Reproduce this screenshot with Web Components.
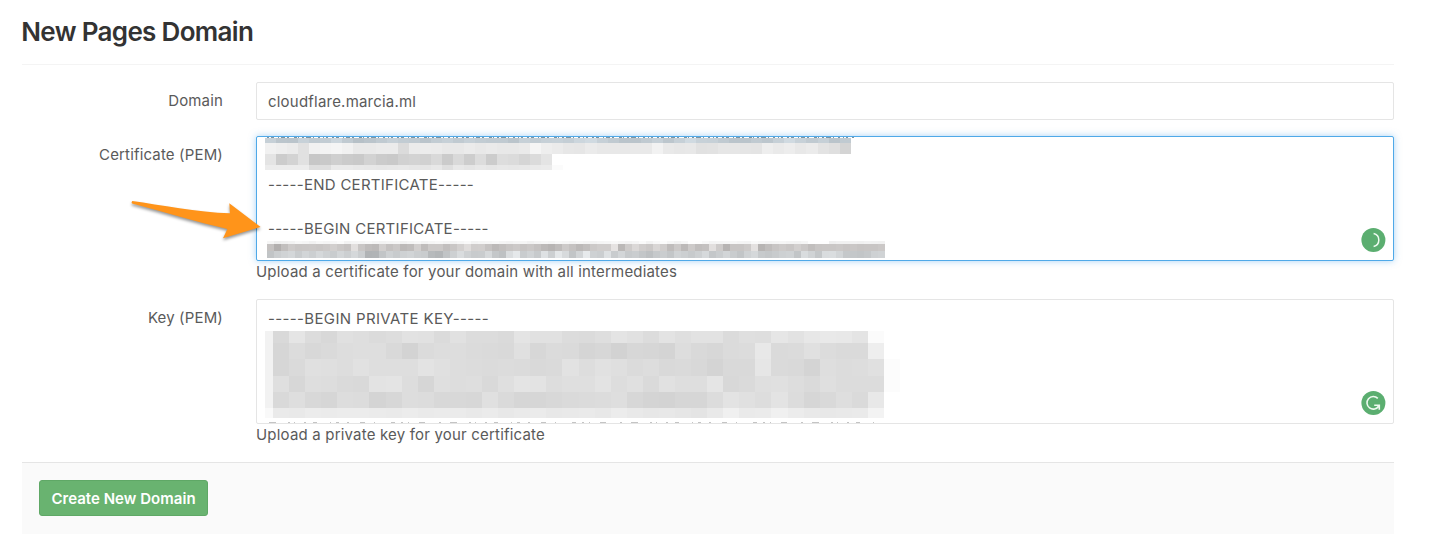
<!DOCTYPE html>
<html lang="en">
<head>
<meta charset="utf-8">
<title>New Pages Domain</title>
<style>
body { margin: 0; background: #fff; font: 15px/22px Inter, "Open Sans", sans-serif; color: #5a5a5a; font-feature-settings: "calt" 0; }
</style>
</head>
<body>
<pages-domain-form></pages-domain-form>
<script>
class BaseElement extends HTMLElement {
  connectedCallback() {
    if (!this.shadowRoot) this.attachShadow({ mode: 'open' }).innerHTML = this.render();
  }
}

/* Title with a hairline below it */
customElements.define('page-title', class extends BaseElement {
  render() {
    return `<style>
      :host { display: block; box-sizing: border-box; height: 65px; padding-top: 16px; border-bottom: 1px solid #f4f4f4; }
      h1 { margin: 0 0 0 -0.7px; font-size: 26px; line-height: 32px; font-weight: 600; letter-spacing: -0.68px; color: #333; white-space: nowrap; }
    </style><h1><slot></slot></h1>`;
  }
});

/* Label on the left, control and hint on the right */
customElements.define('form-row', class extends BaseElement {
  render() {
    return `<style>
      :host { display: grid; grid-template-columns: 201px 1fr; column-gap: 33px; }
      .label { text-align: right; padding-top: 8px; letter-spacing: 0.16px; white-space: nowrap; }
      .hint { display: block; letter-spacing: 0.19px; white-space: nowrap; }
    </style><div class="label">${this.getAttribute('label')}</div>
    <div><slot></slot><span class="hint"><slot name="hint"></slot></span></div>`;
  }
});

customElements.define('text-box', class extends BaseElement {
  render() {
    return `<style>
      :host { display: block; position: relative; box-sizing: border-box; height: 38px; padding: 8px 11px; border: 1px solid #e5e5e5; border-radius: 2px; background: #fff; letter-spacing: var(--value-spacing, 0.21px); }
      :host([multiline]) { height: 125px; }
      :host([focused]) { border-color: #4fa9e8; box-shadow: 0 0 7px rgba(82,168,236,.5); }
      .value { white-space: pre; margin-top: var(--scroll, 0); }
    </style><div class="value"><slot></slot></div><slot name="overlay"></slot>`;
  }
});

/* Redaction mosaic: bands of grey cells */
const bands = {
  certTop: { w: 600, h: 34, rows: [
    { y: 1, h: 5.3, x: 0, p: 11.05, n: 53, tint: 'blue', c: 'c9bebdcac3c5cfc3b9bdc3c9c5c3bdc5c9c3c9c5c3c3bdc9c5c9cac7cfd3c9c3bdbdc3c9bfc9d3cac9c3bdbdc3bfc9d3cac3c9bdc3c9bdbd' },
    { y: 6, h: 11, x: 0, p: 11.05, n: 52, last: 'd4', c: 'f1eeebe1f1f3f5f1e9e9ebebdbebecebe8e8ebe8eae8e8eaf5eeebe7e6ebe8e8e8e9e9f2e9e7e8e1e2e6e6e5e4eeeaede8ebe3dfe9f1e6e5e7e6d4' },
    { y: 17, h: 11, x: 0, p: 11.05, n: 26, c: 'e4ccd3e1c7c9cfcbc9d2cbc9d1d3d1d9cbd9cddcccdad5dbdbe4' },
    { y: 28, h: 5, x: 0, p: 11.05, n: 26, last: 'fb', c: 'ececececdedeeaeae8e7e6e7e8e6e5e8dfe8e5e8e6e8e7e8eaeb' }
  ] },
  certBottom: { w: 618, h: 17, rows: [
    { y: 0, h: 3.4, x: 0, p: 7.02, c: 'f6eff1f3f8f6f2f7f5f7fbf3f5f6f8f5f3f5f6f2f5f7f3f6f8f5f3f6f9f3f5f6f8f5f3f5f6f2f5f7f5f8f6f4f7f5f3f5f6f8f5f3f5faf3f8fcf6f2f6fefdf8f4f5f6f7f5f4f9f6f4f5f6f4f3f6fefefeeff1f1f2f1f3f2f1eff2f3f2f4f1' },
    { y: 3.4, h: 7, x: 0, p: 7.02, tint: 'warm', c: 'c2afbfcbc6c7c8c6c9cfc8c3dfc6bcb9cfc2c8b9bdcfbcc9c9bfc6d0dccdcec3b9bfc5c9c4c8c2b9b4bccac2b9bfc9cdcde3b8cbd8cdc8d6cdbcc9b9cabec1dfcbb4c5c5cae1b4bdc5cac6cfc8bec5c6c6c8c5c7c4c5c5c8c5bdce' },
    { y: 10.4, h: 6.3, x: 0, p: 7.02, tint: 'cool', c: 'c2ccd1d5cad3cdd6cfcad4cdd6ccb1b2c3cfc9cfd2cccab8b4c2cedacfc9cad7c5bfdbe6cad1c8dfcde5d8c3d3e8cfccdfcad4c8cbc4bec7cbc4d1cdc8ced7c5cbd3cac3d0d6c8c5c9ced0c3dad1c5dadbd3c6c5c3c6cfd1' }
  ] },
  key: { w: 650, h: 88, rows: [
    { y: 0, h: 12, x: 8, p: 16.08, n: 37, last: 'fb', c: 'd9e5dcd8e0dedbdde2e1dbe1dcdcdae4e1e1dcdbdee4e1dce3dfe2e2dbdfdee6e2e7e9e8e4e0' },
    { y: 12, h: 16.4, x: 8, p: 16.08, n: 38, c: 'd6dcd8dadddeded9d3dbdddddbdad9e0d7dbdad5d7d2d7d6d4ddd9d7dbdce8dadbe0dcdadaee' },
    { y: 28.4, h: 16.3, x: 8, p: 16.08, n: 38, last: 'fc', c: 'd6dae0dfdde1dededee3e0dddcdbdcdbd9dae2dde1dfdbddd9dad8d4d9d9e6dad9d4dedcdde0' },
    { y: 44.7, h: 16, x: 8, p: 16.08, n: 38, last: 'fc', c: 'dfd7dedddad9e3e4ddd6dfddded9dfe4e3dddfdfe3dde0dae1dedee5d8dadfe0dddadfdcdcdc' },
    { y: 60.7, h: 16, x: 8, p: 16.08, n: 38, c: 'd9ded8d6dddcd4d7dddcd8d8d7e0dad6d6d8dadbdcded7d4d3d6d6dce3e0dde3dcd6d9dedae8' },
    { y: 76.7, h: 10, x: 8, p: 16.08, n: 38, c: 'eae9ecebececebeaeceaebebe9ebe8eaebe8e9eae8ece9e7e8e6e4e9f0eaebf0ece9e8e9eaf3' },
    { y: 0, h: 76.7, x: 0, p: 8, c: 'f2' }, { y: 76.7, h: 10, x: 0, p: 8, c: 'f9' }
  ] }
};
/* band 3 of the certificate, cell by cell from the left edge */
bands.certTop.rows[2].c = ['e4', 'cc', 'd3', 'e1', 'c7', 'c9', 'cf', 'cb', 'c9', 'd2', 'cb', 'c9', 'd1', 'd3', 'd1', 'd9', 'cb', 'd9', 'cd', 'dc', 'cc', 'dd', 'db', 'd5', 'db', 'e4'].join('');

customElements.define('pixel-mosaic', class extends BaseElement {
  render() {
    const b = bands[this.getAttribute('pattern')];
    const tint = { blue: [-3, 7, 14], warm: [3, 0, -1], cool: [-1, 2, 4] };
    const cells = b.rows.map(r => {
      const levels = r.c.match(/../g).slice(0, r.n);
      if (r.last) levels.push(r.last);
      return levels.map((v, i) => {
        const g = parseInt(v, 16), t = tint[r.tint] || [0, 0, 0];
        return `<rect x="${(r.x + i * r.p).toFixed(2)}" y="${r.y}" width="${r.p}" height="${r.h}" fill="rgb(${t.map(d => Math.min(255, g + d)).join(',')})"/>`;
      }).join('');
    }).join('');
    return `<style>:host { display: block; position: absolute; } svg { display: block; }</style>
      <svg width="${b.w}" height="${b.h}" shape-rendering="crispEdges" aria-hidden="true">${cells}</svg>`;
  }
});

/* One-pixel sliver of a text line cut off by the scroll edge */
customElements.define('clipped-line', class extends BaseElement {
  render() {
    const dash = this.getAttribute('dash');
    return `<style>:host { display: block; position: absolute; } svg { display: block; }</style>
      <svg width="${this.getAttribute('width')}" height="1" aria-hidden="true"><path d="M0 .5H700" stroke="${this.getAttribute('color')}" stroke-dasharray="${dash}"/></svg>`;
  }
});

customElements.define('writing-badge', class extends BaseElement {
  render() {
    const glyph = this.hasAttribute('loading')
      ? '<path d="M12.2 5.5A6.6 6.6 0 0 1 12.2 18.4" stroke-width="1.5"/>'
      : '<path d="M16.4 7.4A6.3 6.3 0 1 0 17.3 15M12.8 14.2H17.9V18.7" stroke-width="1.6"/>';
    return `<style>:host { display: block; position: absolute; right: 7px; bottom: 8px; } svg { display: block; overflow: visible; }</style>
      <svg width="24" height="24" viewBox="0.6 0 24 24" fill="none" stroke="#eefaf0" aria-hidden="true"><circle cx="12" cy="12" r="12" fill="#5bae70" stroke="none"/>${glyph}</svg>`;
  }
});

customElements.define('pointer-arrow', class extends BaseElement {
  render() {
    return `<style>
      :host { display: block; position: absolute; left: 122px; top: 194px; }
      svg { display: block; overflow: visible; filter: drop-shadow(0 2px 1.5px rgba(0,0,0,.42)); }
    </style><svg width="146" height="54" viewBox="122 194 146 54" aria-hidden="true">
      <path fill="#ff941a" d="M132.3 200.9C160 204.8 198 212 230 213.3L229.3 203.3L260.6 227L223 238.2L227.4 229C196 222 164 212 132 203.6Q131 202 132.3 200.9Z"/></svg>`;
  }
});

customElements.define('form-actions', class extends BaseElement {
  render() {
    return `<style>:host { display: flex; align-items: flex-start; box-sizing: border-box; height: 72px; padding: 17px; border-top: 1px solid #e5e5e5; background: #fafafa; }</style><slot></slot>`;
  }
});

customElements.define('submit-button', class extends BaseElement {
  render() {
    return `<style>
      :host { display: block; }
      button { display: block; box-sizing: border-box; width: 169px; height: 36px; margin: 0; padding: 1px 0 0; border: 1px solid #5fa866; border-radius: 3px; background: #69b370; color: #fff; font: 600 15px/22px Inter, sans-serif; letter-spacing: 0.03px; white-space: nowrap; }
    </style><button type="button"><slot></slot></button>`;
  }
});

customElements.define('pages-domain-form', class extends BaseElement {
  render() {
    return `<style>
      :host { display: block; position: relative; width: 1372px; padding-left: 22px; }
      .fields { display: grid; row-gap: 16px; padding: 17px 0; height: 363px; align-content: start; }
      .cert { --value-spacing: 0.28px; --scroll: -15px; }
      .key { --value-spacing: 0.36px; }
      .m1 { left: 8px; top: 0; } .m2 { left: 10px; top: 104px; } .m3 { left: 8px; top: 31px; }
      .c1 { left: 10px; top: 0; } .c2 { left: 12px; bottom: 0; }
    </style>
    <page-title>New Pages Domain</page-title>
    <div class="fields">
      <form-row label="Domain"><text-box>cloudflare.marcia.ml</text-box></form-row>
      <form-row label="Certificate (PEM)" class="cert"><text-box multiline focused><br>
-----END CERTIFICATE-----

-----BEGIN CERTIFICATE-----<pixel-mosaic class="m1" slot="overlay" pattern="certTop"></pixel-mosaic><clipped-line class="c1" slot="overlay" width="587" color="#7f95a3" dash="2 2 3 4 1 2 4 2 2 5 3 1 1 3 2 2 5 2 1 4 2 3 1 2 2 4"></clipped-line><pixel-mosaic class="m2" slot="overlay" pattern="certBottom"></pixel-mosaic><writing-badge slot="overlay" loading></writing-badge></text-box><span slot="hint">Upload a certificate for your domain with all intermediates</span></form-row>
      <form-row label="Key (PEM)" class="key"><text-box multiline>-----BEGIN PRIVATE KEY-----<pixel-mosaic class="m3" slot="overlay" pattern="key"></pixel-mosaic><clipped-line class="c2" slot="overlay" width="606" color="#c4c4c4" dash="7 12 2 4 1 9 2 7 4 13 1 5 3 8 2 11 5 9 1 16 4 6 2 5 1 10 6 14 2 9"></clipped-line><writing-badge slot="overlay"></writing-badge></text-box><span slot="hint">Upload a private key for your certificate</span></form-row>
    </div>
    <form-actions><submit-button>Create New Domain</submit-button></form-actions>
    <pointer-arrow></pointer-arrow>`;
  }
});
</script>
</body>
</html>
